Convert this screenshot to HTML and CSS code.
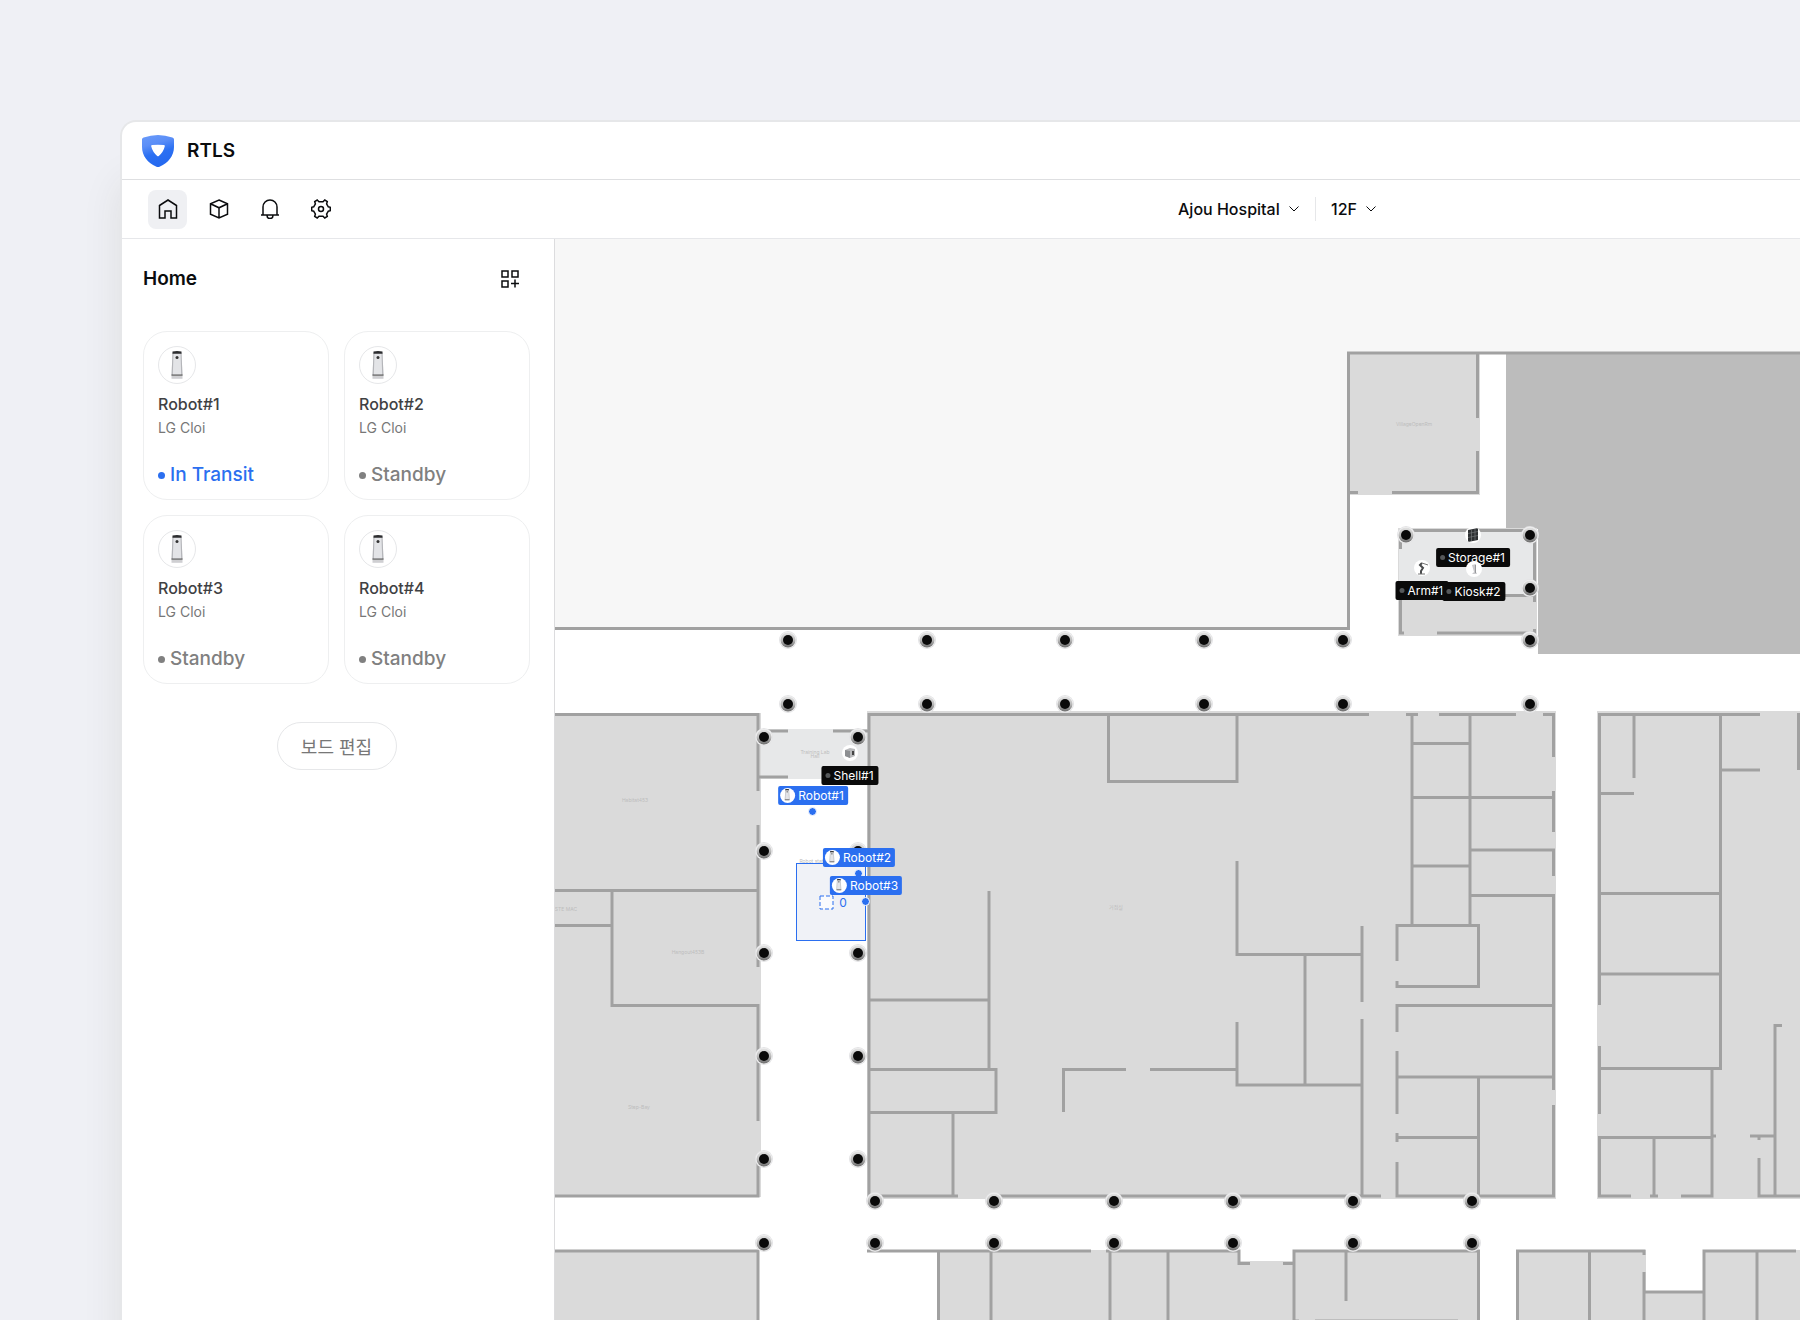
FILE: index.html
```html
<!DOCTYPE html>
<html lang="en">
<head>
  <meta charset="UTF-8" />
  <title>RTLS</title>
  <link rel="stylesheet" href="styles.css">
</head>
<body>
  <div class="window">
    <header class="brand">
      <svg class="logo" viewBox="0 0 34 34" aria-hidden="true">
        <defs>
          <linearGradient id="shield" x1="0" y1="0" x2="0.3" y2="1">
            <stop offset="0" stop-color="#6a9bfa" />
            <stop offset="0.35" stop-color="#5b8ef7" />
            <stop offset="0.65" stop-color="#2b70f2" />
            <stop offset="1" stop-color="#2569f0" />
          </linearGradient>
        </defs>
        <path fill="url(#shield)" d="M1 5.500Q1 4 2.600 3.500Q17-1.500 31.400 3.500Q33 4 33 5.500V13C33 22 27 29 19 32.500Q17 33.500 15 32.500C7 29 1 22 1 13Z" />
        <path fill="#fff" d="M10.200 12.300Q10 11.200 11.200 11.100Q17 10.300 22.800 11.100Q24 11.200 23.800 12.300Q22.500 18 17.800 22Q17 22.600 16.200 22Q11.500 18 10.200 12.300Z" />
      </svg>
      <h1>RTLS</h1>
    </header>

    <div class="toolbar">
      <nav class="tabs" aria-label="Main">
        <button class="tab active" type="button" aria-label="Home">
          <svg viewBox="0 0 20 20"><path d="M1.500 6.500 10 1l8.500 5.500V19H13v-7H7v7H1.500Z" /></svg>
        </button>
        <button class="tab" type="button" aria-label="Assets">
          <svg viewBox="0 0 20 20"><path d="M10 1 18.500 4.800V15.200L10 19 1.500 15.200V4.800ZM1.500 4.800 10 8.800l8.500-4M10 8.800V19" /></svg>
        </button>
        <button class="tab" type="button" aria-label="Alerts">
          <svg viewBox="0 0 20 20"><path d="M1 16H19M3 16V8a7 7 0 0 1 14 0v8M7 16.500a3 3 0 0 0 6 0" /></svg>
        </button>
        <button class="tab" type="button" aria-label="Settings">
          <svg viewBox="0 0 20 20">
            <path d="M6.200 1 8 2.800H12L13.800 1 16.300 2.500 15.600 5 17.300 7.800 19.300 8.300V11.700L17.300 12.200 15.600 15 16.300 17.500 13.800 19 12 17.200H8L6.200 19 3.700 17.500 4.400 15 2.700 12.200 0.700 11.700V8.300L2.700 7.800 4.400 5 3.700 2.500Z" />
            <circle cx="10" cy="10" r="2.500" />
          </svg>
        </button>
      </nav>
      <div class="place">
        <label class="picker">
          <select aria-label="Building"><option>Ajou Hospital</option></select>
          <svg viewBox="0 0 10 6"><path d="M0.500 0.500 5 5 9.500 0.500" /></svg>
        </label>
        <label class="picker">
          <select aria-label="Floor"><option>12F</option></select>
          <svg viewBox="0 0 10 6"><path d="M0.500 0.500 5 5 9.500 0.500" /></svg>
        </label>
      </div>
    </div>

    <div class="content">
      <aside class="sidebar">
        <div class="sidebar-head">
          <h2>Home</h2>
          <button class="add-widget" type="button" aria-label="Add widget">
            <svg viewBox="0 0 18 18"><path d="M1 1h6v6H1ZM11 1h6v6h-6ZM1 11h6v6H1ZM14 9.500V17.500M10 13.500H18" /></svg>
          </button>
        </div>
        <div class="cards" id="cards"></div>
        <button class="edit-board" type="button">보드 편집</button>
      </aside>

      <main class="map" id="map" aria-label="12F floor plan">
        <svg class="plan">
          <defs>
            <linearGradient id="bezel" x1="0" y1="0" x2="0" y2="1">
              <stop offset="0" stop-color="#e4e4e4" />
              <stop offset="0.5" stop-color="#bcbcbc" />
              <stop offset="1" stop-color="#6c6c6c" />
            </linearGradient>
            <g id="anchor">
              <circle r="9" fill="#e4e4e6" />
              <circle r="8" fill="#f4f4f4" />
              <circle r="7.500" fill="url(#bezel)" />
              <circle r="5" fill="#0a0a0a" />
            </g>
            <!-- delivery robot -->
            <symbol id="robot" viewBox="0 1 12 28">
              <path fill="#e3e4e7" d="M1.500 2H10.500L11.500 26H0.500Z" />
              <path fill="#b4b5b9" d="M1.500 3H2.500L1.800 25H0.500ZM9.500 3h1l1 22h-1.300Z" />
              <path fill="#2c2d2f" d="M1.500 1.500Q6 0.500 10.500 1.500V3.800H1.500Z" />
              <circle cx="6" cy="7.500" r="1.500" fill="#333" />
              <path fill="#555" d="M0.500 24.500H11.500V25.800H0.500Z" />
              <path fill="#cfcfd2" d="M0.500 25.800H11.500V28.800H0.500Z" />
            </symbol>
          </defs>
          <!-- plan units share one origin; shift it to the panel corner -->
          <g transform="translate(-555 -239)">
            <path class="floor" d="M555 629H1349V353H2400V1900H555Z" />
            <path class="void" d="M1506 353H2400V654H1538V529H1506Z" />
            <path class="room" d="M1348 353H1480V495H1348ZM1398 528H1537V636H1398ZM555 713H761V1197H555ZM867 711H1556V1199H867ZM1597 711H2400V1199H1597ZM555 1250H759V1900H555ZM938 1250H1240V1261H1294V1250H1480V1900H938ZM1517 1250H1646V1291H1703V1250H2400V1900H1517Z" />
            <path class="lab" d="M1399 529H1536V595H1399ZM761 729H868V779H761Z" />
            <path class="wall" d="M555 628.500H1348.500V353H2400
              M1477.500 354V418M1477.500 451V492.500M1350 492.500H1358M1392 492.500H1479
              M1400.500 549V530.500H1534.500V602M1402 595.500H1534M1400.500 595V633H1404M1437 633H1534.500V629
              M555 714.500H758V791M758 825V967M555 890.500H757M612 890V1005.500H758V1121M555 925.500H612M758 1160V1196H555
              M760 731H788M833 731H868M758 777H788
              M1369 714.500H869V1196H958M1406 714.500H1418M1439 714.500H1516M1543 714.500H1553.500V757
              M990 1196H1381M1108.500 715V781.500H1237V715
              M1237 861V954.500H1362M1362 926V1002M1362 1019V1197M1305 954V1085M1362 1085H1237V1022M1237 1069.500H1150M1126 1069.500H1063.500V1112
              M989 891V1069M869 1000H989M869 1069.500H996V1112.500H869M953 1112V1196
              M1412 714V925M1470 714V925M1412 743.500H1470M1412 797.500H1553.500M1470 850H1553.500V876M1412 866H1470M1470 895.500H1553.500V1090
              M1553.500 791V832M1397 961V925.500H1478.500V986.500H1397V981
              M1397 1032V1005.500H1553.500M1397 1051V1114M1397 1077H1553.500M1478.500 1077V1196M1397 1133V1142M1397 1137.500H1478M1397 1162V1196H1553.500V1105
              M1760 714.500H1599.500V1005M1634 714V778M1600 793.500H1634M1720.500 714V1068.500H1600M1720 770H1760M1798.500 713V770
              M1600 893.500H1720M1600 974H1720M1599.500 1046V1114M1712 1069V1196H1681M1716 1136H1712M1712 1137.500H1599.500V1196H1631M1654 1137V1196M1650 1196H1658
              M1782 1025.500H1775V1196M1750 1136H1775M1759 1136V1140M1759 1158V1196H2400
              M555 1251H758V1900
              M867 1251H1091M1106 1251H1239V1263.500H1250M1283 1263.500H1294M938.500 1251V1900M991 1251V1900M1110 1251V1900M1168 1251V1900
              M1294 1900V1251H1478.500V1900M1346 1251V1301M1294 1321H1299M1315 1321H1458
              M1517.500 1900V1251H1644V1255M1589.500 1251V1900M1644 1272V1900M1644 1292H1704M1704 1900V1251H1796M1757 1251V1900" />
            <g class="room-names">
              <text x="1414" y="426">VillageOpenRm</text>
              <text x="635" y="802">Habitat453</text>
              <text x="688" y="954">Hangout453B</text>
              <text x="566" y="911">STE MAC</text>
              <text x="639" y="1109">Step-Bay</text>
              <text x="1116" y="909">거점실</text>
              <text x="815" y="754">Training Lab</text>
              <text x="815" y="758">Hall</text>
              <text x="815" y="863">Robot station</text>
              <text x="815" y="867">Zone</text>
            </g>
            <rect class="zone" x="796.500" y="863.500" width="69" height="77" />
            <rect class="zone-mark" x="820" y="896" width="13" height="13" />
            <text class="zone-count" x="843" y="907">0</text>
            <g id="anchors"></g>
          </g>
        </svg>
      </main>
    </div>
  </div>

  <script>
    const ORIGIN = { x: 555, y: 239 };

    const robots = [
      { name: "Robot#1", model: "LG Cloi", status: "In Transit" },
      { name: "Robot#2", model: "LG Cloi", status: "Standby" },
      { name: "Robot#3", model: "LG Cloi", status: "Standby" },
      { name: "Robot#4", model: "LG Cloi", status: "Standby" }
    ];

    const anchors = [
      { xs: [788, 927, 1065, 1204, 1343], ys: [640, 704] },
      { xs: [1530], ys: [535, 588, 640, 704] },
      { xs: [1406], ys: [535] },
      { xs: [764], ys: [737, 851, 953, 1056, 1159, 1243] },
      { xs: [858], ys: [737, 851, 953, 1056, 1159] },
      { xs: [875, 994, 1114, 1233, 1353, 1472], ys: [1201, 1243] }
    ];

    const icons = {
      shell: `<path fill="#b9babc" d="M3 5 8 3 13 4V11L8 13 3 11Z"/><path fill="#8d8f92" d="M3 5 8 6V13L3 11Z"/><path fill="#444" d="M10 6h2v4h-2Z"/>`,
      arm: `<path fill="none" stroke="#4a4b4d" stroke-width="2" d="M7 14V11L9 8 6 5 8 3"/><path fill="none" stroke="#777" d="M8 3 14 5M4 14H11"/>`,
      storage: `<path fill="#2e3133" d="M3 3 13 1V13L3 15Z"/><path fill="none" stroke="#8b8e90" stroke-width="0.500" d="M3 6.500 13 4.500M3 10.500 13 8.500M6.500 3V14M10 2V13"/>`,
      kiosk: `<path fill="#c9c9cc" d="M6 4 10 3V11L11 13H6L8 11Z"/><path fill="#97989b" d="M9 4h1v8H9Z"/>`
    };

    const assets = [
      { name: "Arm#1", icon: "arm", x: 1422, y: 568 },
      { name: "Storage#1", icon: "storage", x: 1473, y: 535 },
      { name: "Kiosk#2", icon: "kiosk", x: 1474, y: 569 },
      { name: "Shell#1", icon: "shell", x: 850, y: 753 }
    ];

    const tracked = [
      { name: "Robot#1", x: 813, y: 812 },
      { name: "Robot#2", x: 859, y: 874 },
      { name: "Robot#3", x: 866, y: 902 }
    ];

    document.getElementById("cards").innerHTML = robots.map(r => `
      <article class="card">
        <span class="avatar"><svg><use href="#robot" /></svg></span>
        <h3>${r.name}</h3>
        <p class="model">${r.model}</p>
        <p class="status ${r.status === "In Transit" ? "moving" : ""}">${r.status}</p>
      </article>`).join("");

    document.getElementById("anchors").innerHTML = anchors.flatMap(a =>
      a.ys.flatMap(y => a.xs.map(x => `<use href="#anchor" x="${x}" y="${y}" />`))
    ).join("");

    const at = p => `left:${p.x - ORIGIN.x}px;top:${p.y - ORIGIN.y}px`;

    const map = document.getElementById("map");
    map.insertAdjacentHTML("beforeend", assets.map(a => `
      <div class="pin asset" style="${at(a)}">
        <svg class="asset-icon" viewBox="0 0 16 16">${icons[a.icon]}</svg>
        <span class="tag">${a.name}</span>
      </div>`).join(""));
    map.insertAdjacentHTML("beforeend", tracked.map(t => `
      <div class="pin robot" style="${at(t)}">
        <span class="tag"><svg class="tag-icon"><use href="#robot" x="2" y="1" width="10" height="12" /></svg>${t.name}</span>
        <i class="dot"></i>
      </div>`).join(""));
  </script>
</body>
</html>
```
FILE: styles.css
```css
* {
  box-sizing: border-box;
}
body {
  margin: 0;
  min-height: 100vh;
  display: flex;
  padding: 120px 0 0 120px;
  overflow: hidden;
  background: #eff0f5;
  font-family: Inter, "Noto Sans CJK KR", sans-serif;
  color: #0b0c0e;
}
h1, h2, h3, p {
  margin: 0;
}
button, select {
  font: inherit;
  color: inherit;
  background: none;
  border: none;
  padding: 0;
  cursor: pointer;
}
svg {
  display: block;
}
.window {
  flex: 1;
  display: flex;
  flex-direction: column;
  background: #fff;
  border: 2px solid #e6e7e9;
  border-width: 2px 0 0 2px;
  border-radius: 16px 0 0 0;
  overflow: hidden;
  box-shadow: 0 60px 40px rgba(60, 60, 20, 0.09);
}

/* top bars */
.brand {
  height: 58px;
  display: flex;
  align-items: center;
  gap: 12px;
  padding: 0 19px;
  border-bottom: 1px solid #dedfe1;
}
.logo {
  width: 34px;
  height: 34px;
}
h1, h2 {
  font-size: 19px;
  line-height: 24px;
  font-weight: 600;
}
.toolbar {
  height: 59px;
  display: flex;
  align-items: center;
  padding-left: 26px;
  border-bottom: 1px solid #e6e7ea;
}
.tabs {
  display: flex;
  gap: 12px;
}
.tab {
  width: 39px;
  height: 39px;
  display: grid;
  place-items: center;
  border-radius: 8px;
}
.tab.active {
  background: #eff0f3;
}
.tab svg,
.add-widget svg,
.picker svg {
  fill: none;
  stroke: #0b0c0e;
  stroke-width: 1.5;
}
.tab svg {
  width: 20px;
  height: 20px;
}
.place {
  display: flex;
  margin-left: auto;
  margin-right: calc(25% + 11px);
}
.picker {
  display: flex;
  align-items: center;
  gap: 9px;
}
.picker + .picker {
  margin-left: 16px;
  padding-left: 15px;
  border-left: 1px solid #e6e7e9;
}
.picker select {
  appearance: none;
  font-size: 16px;
  line-height: 24px;
  font-weight: 500;
}
.picker svg {
  width: 10px;
  height: 6px;
  stroke-width: 1;
}

/* sidebar */
.content {
  flex: 1;
  display: flex;
}
.sidebar {
  width: 433px;
  flex-shrink: 0;
  padding: 28px 24px 24px 21px;
  border-right: 1px solid #dcdcde;
}
.sidebar-head {
  display: flex;
  align-items: center;
  justify-content: space-between;
  padding-right: 11px;
  margin-bottom: 40px;
}
.add-widget svg {
  width: 18px;
  height: 18px;
}
.cards {
  display: grid;
  grid-template-columns: 1fr 1fr;
  gap: 15px;
}
.card {
  padding: 14px 14px 12px;
  border: 1px solid #eeeff0;
  border-radius: 24px;
}
.avatar {
  width: 38px;
  height: 38px;
  display: grid;
  place-items: center;
  border: 1px solid #e6e7e9;
  border-radius: 50%;
  margin-bottom: 10px;
}
.avatar svg {
  width: 12px;
  height: 28px;
}
.card h3 {
  font-size: 16px;
  line-height: 20px;
  font-weight: 500;
  color: #3f4143;
}
.model {
  font-size: 14px;
  line-height: 20px;
  margin-top: 4px;
  color: #777;
}
.status {
  display: flex;
  align-items: center;
  gap: 5px;
  margin-top: 25px;
  font-size: 19px;
  line-height: 24px;
  font-weight: 500;
  color: #808080;
}
.status::before {
  content: "";
  width: 7px;
  height: 7px;
  border-radius: 50%;
  background: currentColor;
}
.status.moving {
  color: #2b6ff0;
}
.edit-board {
  display: block;
  width: 120px;
  height: 48px;
  margin: 38px auto 0;
  border: 1px solid #e6e7e9;
  border-radius: 24px;
  font-size: 18px;
  color: #777;
}

/* floor plan */
.map {
  flex: 1;
  position: relative;
  overflow: hidden;
  background: #f7f7f7;
}
.plan {
  position: absolute;
  width: 100%;
  height: 100%;
}
.floor {
  fill: #fff;
}
.void {
  fill: #bcbcbc;
}
.room {
  fill: #dadada;
}
.lab {
  fill: #e7e8e9;
}
.wall {
  fill: none;
  stroke: #a1a1a1;
  stroke-width: 3;
}
.room-names {
  font-size: 5px;
  text-anchor: middle;
  fill: #bdbdbd;
}
.zone {
  fill: #f0f2f7;
  stroke: #2b6ff0;
}
.zone-mark {
  fill: #fafbfd;
  stroke: #2b6ff0;
  stroke-dasharray: 4 2;
}
.zone-count {
  font-size: 12px;
  text-anchor: middle;
  fill: #2b6ff0;
}
.pin {
  position: absolute;
}
.tag {
  position: absolute;
  left: 0;
  transform: translateX(-50%);
  display: flex;
  align-items: center;
  height: 19px;
  border-radius: 2px;
  font-size: 12px;
  white-space: nowrap;
  color: #fff;
}
.asset .tag {
  top: 13px;
  gap: 3px;
  padding: 0 5px 0 4px;
  background: #0a0a0a;
}
.asset .tag::before {
  content: "";
  width: 5px;
  height: 5px;
  border-radius: 50%;
  background: #55585a;
}
.asset-icon {
  position: absolute;
  left: -8px;
  top: -8px;
  width: 16px;
  height: 16px;
  border-radius: 50%;
  background: #fff;
}
.robot .tag {
  bottom: 7px;
  gap: 3px;
  padding: 0 4px 0 2px;
  background: #2b6ff0;
}
.tag-icon {
  width: 15px;
  height: 15px;
  border-radius: 50%;
  background: #fff;
}
.dot {
  position: absolute;
  left: -5px;
  top: -5px;
  width: 9px;
  height: 9px;
  border: 1px solid #fff;
  border-radius: 50%;
  background: #2b6ff0;
}
```
